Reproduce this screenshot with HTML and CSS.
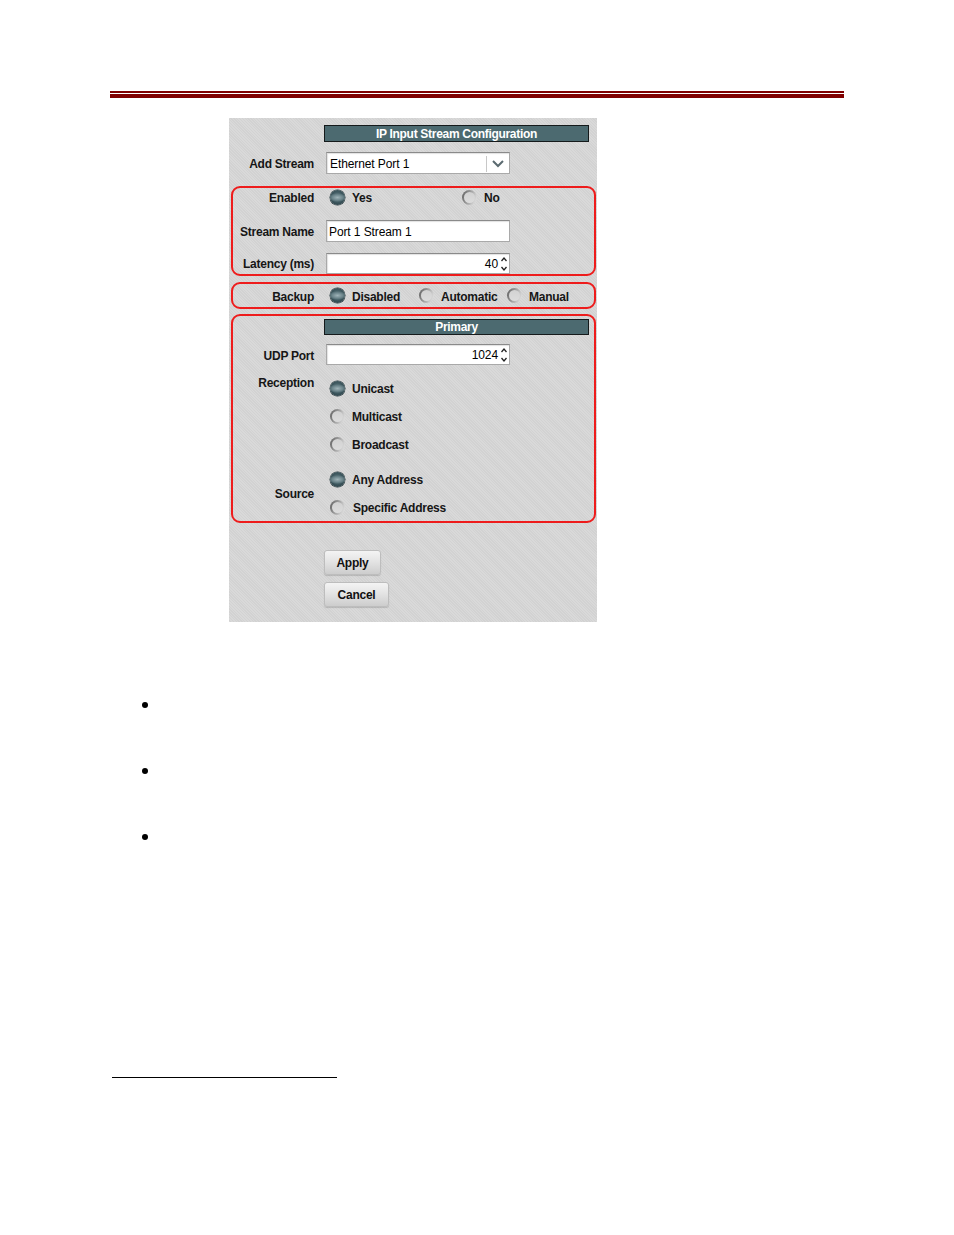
FILE: index.html
```html
<!DOCTYPE html>
<html>
<head>
<meta charset="utf-8">
<link rel="stylesheet" href="styles.css">
</head>
<body>
<div class="rules">
  <div class="rule-thin"></div>
  <div class="rule-thick"></div>
</div>

<div class="panel">
  <div class="title-bar">IP Input Stream Configuration</div>

  <div class="row row-add">
    <div class="label">Add Stream</div>
    <div class="select">
      <span class="select-text">Ethernet Port 1</span>
      <span class="select-btn">
        <svg width="14" height="10" viewBox="0 0 14 10"><polyline points="2,2 7,7 12,2" fill="none" stroke="#5b6a70" stroke-width="2"/></svg>
      </span>
    </div>
  </div>

  <div class="box box1">
    <div class="row row-enabled">
      <div class="label">Enabled</div>
      <div class="opt opt-yes"><span class="radio on"></span><span class="txt">Yes</span></div>
      <div class="opt"><span class="radio off"></span><span class="txt">No</span></div>
    </div>
    <div class="row row-name">
      <div class="label">Stream Name</div>
      <div class="input">Port 1 Stream 1</div>
    </div>
    <div class="row row-lat">
      <div class="label">Latency (ms)</div>
      <div class="input num">
        <span class="num-val">40</span>
        <span class="spin">
          <svg width="8" height="18" viewBox="0 0 8 18"><polyline points="1.5,6 4,3 6.5,6" fill="none" stroke="#222" stroke-width="1.3"/><polyline points="1.5,12 4,15 6.5,12" fill="none" stroke="#222" stroke-width="1.3"/></svg>
        </span>
      </div>
    </div>
  </div>

  <div class="box box2">
    <div class="row row-backup">
      <div class="label">Backup</div>
      <div class="opt opt-dis"><span class="radio on"></span><span class="txt">Disabled</span></div>
      <div class="opt opt-auto"><span class="radio off"></span><span class="txt">Automatic</span></div>
      <div class="opt"><span class="radio off"></span><span class="txt">Manual</span></div>
    </div>
  </div>

  <div class="box box3">
    <div class="title-bar sub">Primary</div>
    <div class="row row-udp">
      <div class="label">UDP Port</div>
      <div class="input num">
        <span class="num-val">1024</span>
        <span class="spin">
          <svg width="8" height="18" viewBox="0 0 8 18"><polyline points="1.5,6 4,3 6.5,6" fill="none" stroke="#222" stroke-width="1.3"/><polyline points="1.5,12 4,15 6.5,12" fill="none" stroke="#222" stroke-width="1.3"/></svg>
        </span>
      </div>
    </div>
    <div class="row row-recv">
      <div class="label label-top">Reception</div>
      <div class="opts">
        <div class="opt item"><span class="radio on"></span><span class="txt">Unicast</span></div>
        <div class="opt item"><span class="radio off"></span><span class="txt">Multicast</span></div>
        <div class="opt item"><span class="radio off"></span><span class="txt">Broadcast</span></div>
      </div>
    </div>
    <div class="row row-src">
      <div class="label label-mid">Source</div>
      <div class="opts">
        <div class="opt item"><span class="radio on"></span><span class="txt">Any Address</span></div>
        <div class="opt item"><span class="radio off"></span><span class="txt shift">Specific Address</span></div>
      </div>
    </div>
  </div>

  <div class="buttons">
    <div class="btn btn-apply">Apply</div>
    <div class="btn btn-cancel">Cancel</div>
  </div>
</div>

<div class="bullets">
  <div class="bullet"></div>
  <div class="bullet"></div>
  <div class="bullet"></div>
</div>

<div class="footnote-rule"></div>
</body>
</html>
```

FILE: styles.css
```css
html, body {
  margin: 0;
  padding: 0;
  background: #ffffff;
}
body {
  width: 954px;
  height: 1235px;
  font-family: "Liberation Sans", Arial, sans-serif;
  overflow: hidden;
}

.rules {
  padding-top: 91px;
  margin-left: 110px;
  width: 734px;
}
.rule-thin {
  height: 2px;
  background: #800000;
}
.rule-thick {
  height: 4px;
  margin-top: 1px;
  background: #800000;
}

.panel {
  margin-top: 20px;
  margin-left: 229px;
  width: 368px;
  height: 504px;
  box-sizing: border-box;
  padding-top: 7px;
  background-color: #d5d5d5;
  background-image: repeating-linear-gradient(45deg, rgba(255,255,255,0.10) 0 1px, rgba(0,0,0,0.015) 1px 2px);
  font-size: 12px;
  font-weight: bold;
  letter-spacing: -0.25px;
  color: #161616;
}

.title-bar {
  margin-left: 95px;
  width: 265px;
  height: 17px;
  box-sizing: border-box;
  border: 1px solid #151a1b;
  background: #4c6a70;
  color: #ffffff;
  text-align: center;
  padding-top: 1px;
  line-height: 15px;
  font-size: 12px;
  font-weight: bold;
  letter-spacing: -0.3px;
}
.title-bar.sub {
  margin-left: 91px;
  margin-top: 3px;
  height: 16px;
  padding-top: 0;
  line-height: 15px;
}

.row {
  display: flex;
  align-items: center;
}
.label {
  width: 81px;
  margin-right: 12px;
  text-align: right;
  flex: none;
  padding-top: 2px;
}
.txt {
  padding-top: 2px;
}

.row-add {
  margin-top: 10px;
  height: 22px;
}
.row-add .label {
  width: 85px;
}

.select, .input {
  width: 184px;
  height: 22px;
  box-sizing: border-box;
  background: #ffffff;
  border: 1px solid #a9a9a9;
  border-top-color: #8a8a8a;
  box-shadow: inset 1px 1px 1px rgba(0,0,0,0.12);
  font-weight: normal;
  letter-spacing: -0.1px;
  color: #000;
  font-size: 12px;
  display: flex;
  align-items: center;
  padding-top: 1px;
}
.select-text {
  flex: 1;
  padding-left: 3px;
}
.select-btn {
  width: 22px;
  height: 16px;
  border-left: 1px solid #c8c8c8;
  display: flex;
  align-items: center;
  justify-content: center;
}
.input {
  padding-left: 2px;
}
.input.num {
  justify-content: flex-end;
  padding-right: 1px;
}
.num-val {
  margin-right: 1px;
}
.spin {
  width: 9px;
  height: 18px;
  display: flex;
  align-items: center;
  justify-content: center;
}

.box {
  margin-left: 2px;
  width: 365px;
  box-sizing: border-box;
  border: 2px solid #ee1c1c;
  border-radius: 9px;
}
.box1 {
  margin-top: 12px;
}
.row-enabled {
  height: 19px;
}
.row-enabled .label, .row-enabled .txt {
  padding-top: 0;
}
.row-name {
  margin-top: 13px;
  height: 22px;
}
.row-lat {
  margin-top: 11px;
  height: 21px;
}
.row-lat .input, .row-udp .input {
  height: 21px;
}
.row-lat .label {
  padding-top: 0;
}

.opt {
  display: flex;
  align-items: center;
  gap: 7px;
}
.row-enabled .label, .row-backup .label {
  margin-right: 16px;
}
.opt-yes {
  width: 132px;
}

.radio {
  width: 15px;
  height: 15px;
  border-radius: 50%;
  flex: none;
  box-sizing: border-box;
  position: relative;
}
.radio.on {
  background: radial-gradient(ellipse 60% 30% at 50% 50%, #9fb3b8 0%, #6c858b 60%, transparent 100%),
              radial-gradient(circle at 50% 45%, #5d777e 0%, #3a545b 55%, #22353a 100%);
  box-shadow: 0 0 0 0.5px #2a3c41;
}
.radio.off {
  background: linear-gradient(110deg, #5a5a5a 0%, #8e8e8e 35%, #c4c4c4 70%, #ececec 100%);
}
.radio.off::after {
  content: "";
  position: absolute;
  left: 2px;
  top: 2px;
  right: 2px;
  bottom: 2px;
  border-radius: 50%;
  background: linear-gradient(#d2d2d2, #dcdcdc);
}

.box2 {
  margin-top: 6px;
}
.row-backup {
  height: 23px;
}
.opt-dis {
  width: 89px;
}
.opt-auto {
  width: 88px;
}

.box3 {
  margin-top: 5px;
  height: 209px;
}
.row-udp {
  margin-top: 9px;
  height: 21px;
}
.row-recv {
  margin-top: 9px;
  align-items: flex-start;
}
.label-top {
  line-height: 16px;
  padding-top: 1px;
}
.row-recv .label, .row-src .label {
  margin-right: 16px;
}
.opts {
  display: flex;
  flex-direction: column;
}
.opt.item {
  height: 28px;
}
.row-src {
  margin-top: 7px;
}
.shift {
  margin-left: 1px;
}

.buttons {
  margin-top: 27px;
  margin-left: 95px;
  display: flex;
  flex-direction: column;
  align-items: flex-start;
  gap: 7px;
}
.btn {
  height: 25px;
  box-sizing: border-box;
  border: 1px solid #bdbdbd;
  border-radius: 3px;
  background: linear-gradient(#f4f4f4 0%, #e2e2e2 50%, #cdcdcd 100%);
  box-shadow: 0 1px 1px rgba(0,0,0,0.15);
  padding-top: 1px;
  line-height: 23px;
  text-align: center;
  font-size: 12px;
  font-weight: bold;
  color: #111;
}
.btn-apply {
  width: 57px;
}
.btn-cancel {
  width: 65px;
}

.bullets {
  margin-top: 80px;
  margin-left: 142px;
  display: flex;
  flex-direction: column;
  gap: 60px;
}
.bullet {
  width: 6px;
  height: 6px;
  border-radius: 50%;
  background: #000;
}

.footnote-rule {
  margin-top: 237px;
  margin-left: 112px;
  width: 225px;
  height: 1px;
  background: #000;
}
```
